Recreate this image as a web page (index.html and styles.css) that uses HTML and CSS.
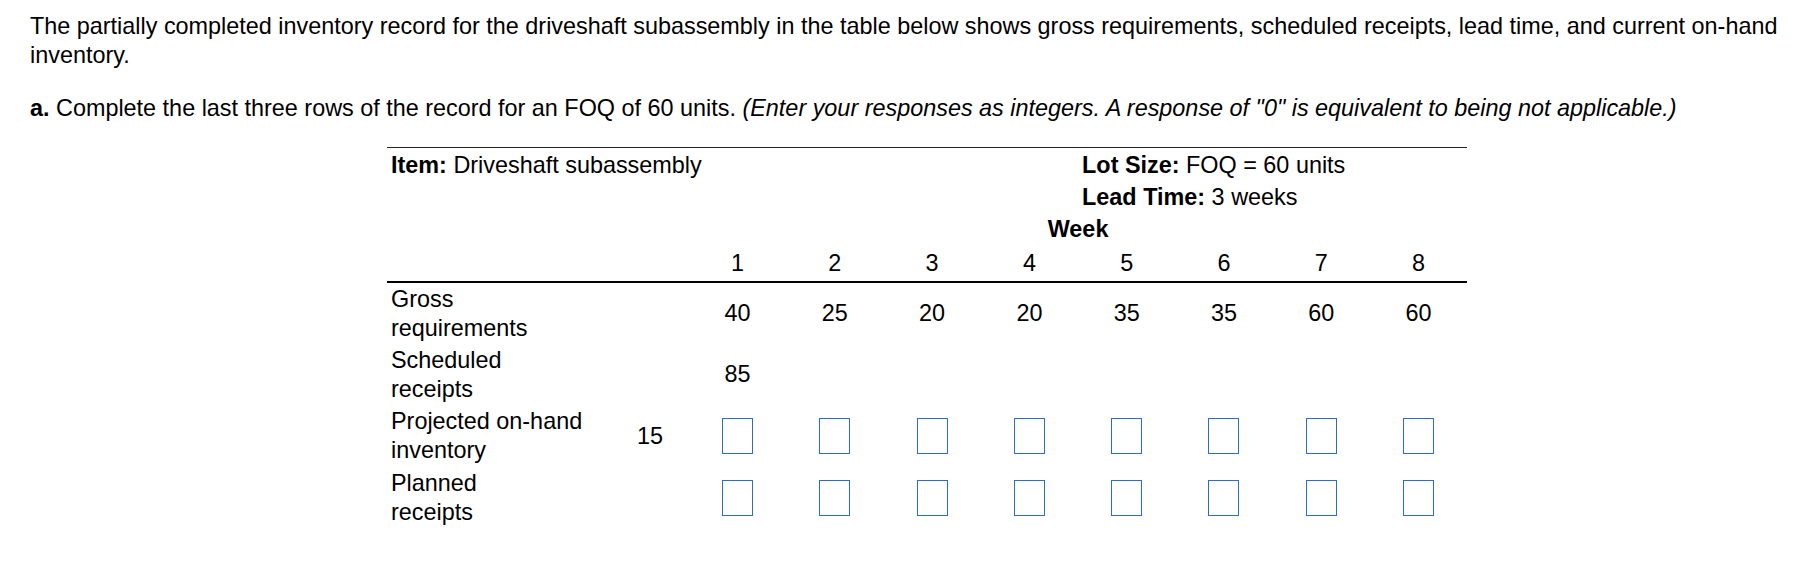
FILE: index.html
```html
<!DOCTYPE html>
<html>
<head>
<meta charset="utf-8">
<link rel="stylesheet" href="styles.css">
</head>
<body>
<div class="page">
  <p class="intro">The partially completed inventory record for the driveshaft subassembly in the table below shows gross requirements, scheduled receipts, lead time, and current on-hand inventory.</p>
  <p class="task"><b>a.</b> Complete the last three rows of the record for an FOQ of 60 units. <i>(Enter your responses as integers. A response of "0" is equivalent to being not applicable.)</i></p>
  <table class="record">
    <colgroup>
      <col class="c-label"><col class="c-init">
      <col class="c-week"><col class="c-week"><col class="c-week"><col class="c-week">
      <col class="c-week"><col class="c-week"><col class="c-week"><col class="c-week">
    </colgroup>
    <tr class="hdr h1">
      <td colspan="6" class="meta"><b>Item:</b> Driveshaft subassembly</td>
      <td colspan="4" class="meta"><b>Lot Size:</b> FOQ = 60 units</td>
    </tr>
    <tr class="hdr h2">
      <td colspan="6"></td>
      <td colspan="4" class="meta"><b>Lead Time:</b> 3 weeks</td>
    </tr>
    <tr class="hdr h3">
      <td colspan="2"></td>
      <td colspan="8" class="week"><b>Week</b></td>
    </tr>
    <tr class="hdr nums">
      <td></td><td></td>
      <td>1</td><td>2</td><td>3</td><td>4</td><td>5</td><td>6</td><td>7</td><td>8</td>
    </tr>
    <tr class="row">
      <td class="label">Gross<br>requirements</td><td></td>
      <td>40</td><td>25</td><td>20</td><td>20</td><td>35</td><td>35</td><td>60</td><td>60</td>
    </tr>
    <tr class="row">
      <td class="label">Scheduled<br>receipts</td><td></td>
      <td>85</td><td></td><td></td><td></td><td></td><td></td><td></td><td></td>
    </tr>
    <tr class="row">
      <td class="label">Projected on-hand<br>inventory</td><td class="init">15</td>
      <td><span class="box"></span></td><td><span class="box"></span></td><td><span class="box"></span></td><td><span class="box"></span></td>
      <td><span class="box"></span></td><td><span class="box"></span></td><td><span class="box"></span></td><td><span class="box"></span></td>
    </tr>
    <tr class="row">
      <td class="label">Planned<br>receipts</td><td></td>
      <td><span class="box"></span></td><td><span class="box"></span></td><td><span class="box"></span></td><td><span class="box"></span></td>
      <td><span class="box"></span></td><td><span class="box"></span></td><td><span class="box"></span></td><td><span class="box"></span></td>
    </tr>
  </table>
</div>
</body>
</html>
```

FILE: styles.css
```css
html, body {
  margin: 0;
  padding: 0;
  background: #fff;
}

.page {
  padding: 12px 15px 0 30px;
  font-family: "Liberation Sans", Arial, sans-serif;
  font-size: 23.4px;
  line-height: 29px;
  color: #000;
}

.intro {
  margin: 0;
}

.task {
  margin: 24px 0 0 0;
}

.record {
  margin: 24px 0 0 357px;
  border-collapse: collapse;
  table-layout: fixed;
  width: 1080px;
  font-size: 23.4px;
}

.c-label { width: 224px; }
.c-init { width: 78px; }
.c-week { width: 97.25px; }

.record td {
  padding: 0;
  text-align: center;
  vertical-align: middle;
  white-space: nowrap;
}

.hdr td {
  line-height: 28px;
}

.h1 td {
  height: 33px;
  border-top: 1px solid #222;
}

.h2 td,
.h3 td {
  height: 32px;
}

.hdr .meta {
  text-align: left;
  padding-left: 4px;
}

.nums td {
  height: 36px;
  border-bottom: 2px solid #000;
}

.row td {
  height: 61.3px;
  line-height: 29px;
}

.row .label {
  text-align: left;
  height: 59.3px;
  padding: 1px 8px 1px 4px;
}

.box {
  display: inline-block;
  width: 29px;
  height: 34px;
  border: 1px solid #2c6cd0;
  vertical-align: middle;
}
```
